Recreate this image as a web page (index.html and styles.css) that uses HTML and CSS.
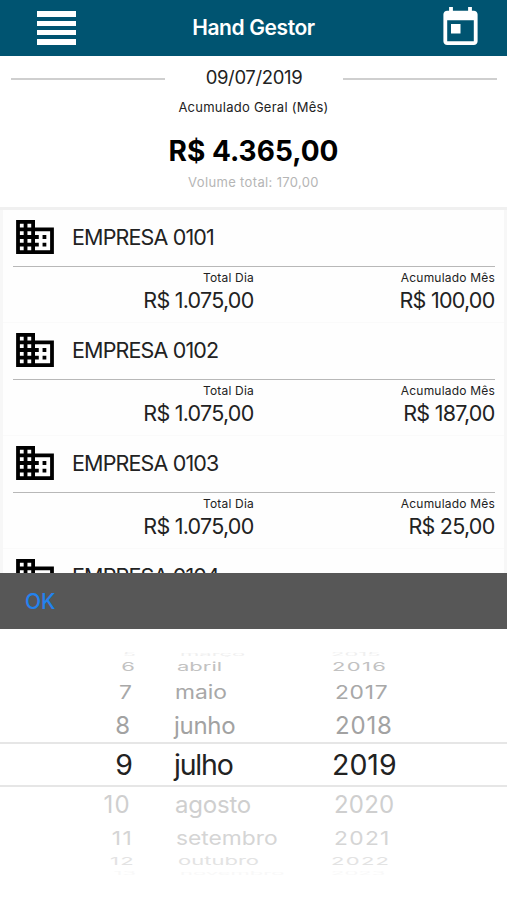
FILE: index.html
```html
<!DOCTYPE html>
<html lang="pt-BR">
<head>
<meta charset="utf-8">
<title>Hand Gestor</title>
<link rel="stylesheet" href="styles.css">
</head>
<body>
<svg width="0" height="0" class="defs">
  <symbol id="company" viewBox="2 3 20 18"><path d="M12 7V3H2v18h20V7H12zM6 19H4v-2h2v2zm0-4H4v-2h2v2zm0-4H4V9h2v2zm0-4H4V5h2v2zm4 12H8v-2h2v2zm0-4H8v-2h2v2zm0-4H8V9h2v2zm0-4H8V5h2v2zm10 12h-8v-2h2v-2h-2v-2h2v-2h-2V9h8v10zm-2-8h-2v2h2v-2zm0 4h-2v2h2v-2z"/></symbol>
</svg>
<div class="app">
  <header class="bar">
    <div class="menu"><i></i><i></i><i></i><i></i></div>
    <h1><span>Hand Gestor</span></h1>
    <svg class="calendar" viewBox="3 1 18 20"><path d="M19 3h-1V1h-2v2H8V1H6v2H5c-1.100 0-2 .9-2 2v14c0 1.100.9 2 2 2h14c1.100 0 2-.9 2-2V5c0-1.100-.9-2-2-2zm0 16H5V8h14v11zM7 10h5v5H7z"/></svg>
  </header>
  <section class="summary">
    <div class="date"><span>09/07/2019</span></div>
    <div class="caption"><span>Acumulado Geral (Mês)</span></div>
    <div class="total"><span>R$ 4.365,00</span></div>
    <div class="volume"><span>Volume total: 170,00</span></div>
  </section>
  <main class="list">
    <article class="card">
      <div class="name"><svg><use href="#company"/></svg><span>EMPRESA 0101</span></div>
      <div class="figures">
        <div><small>Total Dia</small><b>R$ 1.075,00</b></div>
        <div><small>Acumulado Mês</small><b>R$ 100,00</b></div>
      </div>
    </article>
    <article class="card">
      <div class="name"><svg><use href="#company"/></svg><span>EMPRESA 0102</span></div>
      <div class="figures">
        <div><small>Total Dia</small><b>R$ 1.075,00</b></div>
        <div><small>Acumulado Mês</small><b>R$ 187,00</b></div>
      </div>
    </article>
    <article class="card">
      <div class="name"><svg><use href="#company"/></svg><span>EMPRESA 0103</span></div>
      <div class="figures">
        <div><small>Total Dia</small><b>R$ 1.075,00</b></div>
        <div><small>Acumulado Mês</small><b>R$ 25,00</b></div>
      </div>
    </article>
    <article class="card">
      <div class="name"><svg><use href="#company"/></svg><span>EMPRESA 0104</span></div>
    </article>
  </main>
  <section class="sheet">
    <div class="toolbar"><span>OK</span></div>
    <div class="picker">
      <div class="row edge top"><span>5</span><span>março</span><span>2015</span></div>
      <div class="row m3"><span>6</span><span>abril</span><span>2016</span></div>
      <div class="row m2"><span>7</span><span>maio</span><span>2017</span></div>
      <div class="row m1"><span>8</span><span>junho</span><span>2018</span></div>
      <div class="row now"><span>9</span><span>julho</span><span>2019</span></div>
      <div class="row p1"><span>10</span><span>agosto</span><span>2020</span></div>
      <div class="row p2"><span>11</span><span>setembro</span><span>2021</span></div>
      <div class="row p3"><span>12</span><span>outubro</span><span>2022</span></div>
      <div class="row edge bottom"><span>13</span><span>novembro</span><span>2023</span></div>
    </div>
  </section>
</div>
</body>
</html>
```
FILE: styles.css
```css
* { box-sizing: border-box; }
body {
  margin: 0;
  background: #fff;
  color: #222;
  font-family: Inter, Roboto, "Liberation Sans", sans-serif;
}
.defs { display: block; }
.app {
  width: 507px;
  height: 900px;
  overflow: hidden;
  display: flex;
  flex-direction: column;
}
.bar {
  flex: none;
  height: 56px;
  background: #005471;
  display: grid;
  grid-template-columns: 75px 1fr 75px;
  align-items: center;
}
.menu {
  display: grid;
  gap: 4px;
  width: 39px;
  margin-left: 37px;
}
.menu i { height: 5.300px; background: #fff; }
h1 {
  margin: 0;
  text-align: center;
  color: #fff;
  font-size: 21px;
  line-height: 28px;
  font-weight: 600;
  letter-spacing: -0.400px;
}
.calendar { width: 35px; height: 38px; margin: -5px 0 0 11px; fill: #fff; }
.summary {
  flex: none;
  height: 151px;
  text-align: center;
  white-space: nowrap;
}
.date {
  display: flex;
  align-items: center;
  justify-content: space-between;
  margin: 8px 10px 0 11px;
  height: 27px;
  font-size: 18.500px;
  letter-spacing: -0.350px;
}
.date span { padding-bottom: 2px; }
.date::before, .date::after {
  content: "";
  width: 154px;
  height: 2px;
  background: #cfcfcf;
  margin-top: 3px;
}
.caption { margin-top: 7px; font-size: 13px; line-height: 18px; letter-spacing: .25px; }
.total { margin-top: 17px; font-size: 28px; line-height: 36px; font-weight: 700; color: #000; }
.volume { margin-top: 4px; font-size: 13px; line-height: 18px; color: #b5b5b5; letter-spacing: .35px; }
.list {
  flex: none;
  height: 366px;
  overflow: hidden;
  background: #f7f7f7;
  border-top: 3px solid #f0f0f0;
  padding: 0 3px;
}
.card {
  height: 113px;
  background: #fefefe;
  padding: 0 9px 0 10px;
  border-bottom: 1px solid #fafafa;
}
.name {
  height: 57px;
  padding-bottom: 2px;
  display: flex;
  align-items: center;
  border-bottom: 1px solid #b8b8b8;
  font-size: 21.500px;
  letter-spacing: -0.850px;
}
.name svg { width: 38px; height: 34px; margin: 0 18px 0 3px; fill: #000; }
.figures {
  display: grid;
  grid-template-columns: 241px 241px;
  text-align: right;
  white-space: nowrap;
}
.figures small { display: block; font-size: 12px; line-height: 16px; margin-top: 3px; letter-spacing: .2px; }
.figures b { display: block; font-weight: 400; font-size: 21.500px; line-height: 28px; letter-spacing: -0.750px; padding-right: .5px; }
.sheet { flex: none; height: 327px; background: #fff; }
.toolbar {
  height: 56px;
  background: #575757;
  display: flex;
  align-items: center;
  padding-left: 25px;
  color: #2382ee;
  font-size: 21px;
  font-weight: 500;
}
.picker { padding-top: 21px; }
.row {
  --y: 1;
  height: 35px;
  display: grid;
  grid-template-columns: var(--day) calc(var(--year) - var(--day)) 1fr;
  align-items: center;
  white-space: nowrap;
  font-size: 24px;
}
.row span { transform: scaleY(var(--y)); }
.row span:first-child { text-align: right; }
.row span:nth-child(2) { padding-left: calc(var(--month) - var(--day)); }
.edge { height: 9px; color: #efefef; --y: .2; --day: 136px; --month: 180px; --year: 331px; line-height: 9px; font-size: 22px; }
.m3 { height: 16px; color: #c2c2c2; --y: .53; --day: 135px; --month: 177px; --year: 332px; line-height: 16px; font-size: 22px; }
.m3 span:last-child { letter-spacing: 1.300px; }
.m2 { height: 32px; color: #a8a8a8; --y: .83; --day: 132px; --month: 175px; --year: 335px; font-size: 22.800px; }
.m2 span:last-child { letter-spacing: .7px; }
.m1 { padding-top: 2px; color: #a2a2a2; --day: 130px; --month: 174px; --year: 335px; }
.m1 span:nth-child(2) { letter-spacing: -0.300px; }
.m1 span:last-child { letter-spacing: .8px; }
.now { height: 45px; color: #222; --day: 133px; --month: 174px; --year: 332px; font-size: 28.500px; border: solid #e6e6e6; border-width: 2px 0; }
.now span:nth-child(2) { letter-spacing: -1.200px; }
.p1 { color: #cfcfcf; --day: 131px; --month: 175px; --year: 334px; }
.p1 span { letter-spacing: -0.200px; }
.p1 span:first-child { letter-spacing: 1.300px; }
.p1 span:last-child { letter-spacing: .2px; }
.p2 { height: 31px; color: #d5d5d5; --y: .83; --day: 133px; --month: 176px; --year: 334px; font-size: 22.800px; }
.p2 span:first-child, .p2 span:last-child { letter-spacing: 1.300px; }
.p3 { height: 16px; color: #e3e3e3; --y: .5; --day: 135px; --month: 178px; --year: 331px; line-height: 16px; font-size: 22px; }
.p3 span:first-child, .p3 span:last-child { letter-spacing: 1.300px; }
.bottom { color: #f8f8f8; }
```
